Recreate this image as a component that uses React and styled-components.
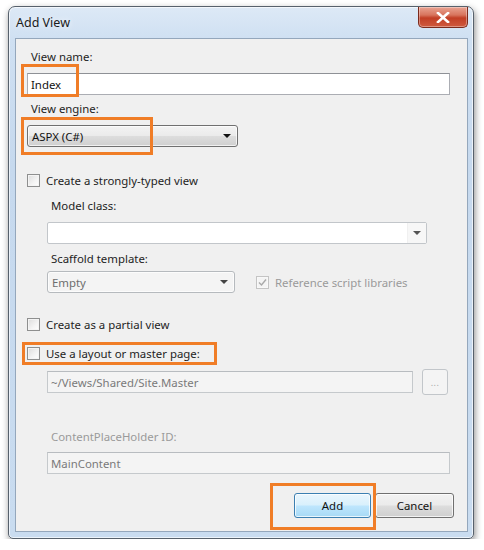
import React from 'react';
import styled, { createGlobalStyle } from 'styled-components';

const GlobalStyle = createGlobalStyle`
  body {
    margin: 0;
    background: #ffffff;
    font-family: "Noto Sans", "Open Sans", sans-serif;
    font-size: 11.4px;
    color: #1e1e1e;
  }
`;

const Page = styled.div`
  padding: 6px 0 0 8px;
`;

const Window = styled.div`
  width: 466px;
  height: 533px;
  box-sizing: border-box;
  display: flex;
  flex-direction: column;
  border: 1px solid #57616c;
  border-radius: 7px 7px 5px 5px;
  background: linear-gradient(180deg, #dde9f6 0%, #cfe0f2 6%, #c6d9ee 30%, #c9dcf0 100%);
  box-shadow: 1px 3px 7px rgba(0, 0, 0, 0.45), inset 0 0 0 1px rgba(255, 255, 255, 0.65);
`;

const TitleBar = styled.div`
  height: 31px;
  flex: none;
  display: flex;
  justify-content: space-between;
  align-items: flex-start;
  padding-left: 7px;
`;

const Title = styled.span`
  margin-top: 7px;
  font-size: 12.5px;
  color: #1b1b1b;
  text-shadow: 0 0 6px rgba(255, 255, 255, 0.9);
`;

const CloseButton = styled.div`
  width: 48px;
  height: 20px;
  margin-right: 5px;
  display: flex;
  align-items: center;
  justify-content: center;
  border: 1px solid #7b2a1c;
  border-top: none;
  border-radius: 0 0 5px 5px;
  background: linear-gradient(180deg, #e9a392 0%, #d8745d 40%, #c23e25 55%, #cf5a3f 100%);
  box-shadow: inset 0 0 0 1px rgba(255, 255, 255, 0.35);
`;

const Body = styled.div`
  position: relative;
  flex: 1;
  margin: 0 5px 6px 6px;
  padding: 10px 17px 0 11px;
  display: flex;
  flex-direction: column;
  background: #f0f0f0;
  border: 1px solid #94a7bc;
`;

const Label = styled.div`
  height: 16px;
  line-height: 16px;
  margin-top: ${({ $top }) => $top || 0}px;
  padding-left: ${({ $indent }) => ($indent || 0) + 4}px;
  color: ${({ $disabled }) => ($disabled ? '#9a9a9a' : '#1e1e1e')};
  white-space: nowrap;
`;

const TextBox = styled.div`
  height: 22px;
  box-sizing: border-box;
  margin-top: ${({ $top }) => $top || 0}px;
  margin-left: ${({ $indent }) => $indent || 0}px;
  width: ${({ $width }) => ($width ? `${$width}px` : 'auto')};
  padding-left: 3px;
  display: flex;
  align-items: center;
  border: 1px solid ${({ $disabled }) => ($disabled ? '#c5c9cc' : '#abadb3')};
  border-top-color: ${({ $disabled }) => ($disabled ? '#b8bcc0' : '#8e9196')};
  background: ${({ $disabled }) => ($disabled ? '#f4f4f4' : '#ffffff')};
  color: ${({ $disabled }) => ($disabled ? '#7a7a7a' : '#111')};
  white-space: nowrap;
`;

const Combo = styled.div`
  height: 22px;
  box-sizing: border-box;
  width: ${({ $width }) => $width}px;
  margin-top: ${({ $top }) => $top || 0}px;
  margin-left: ${({ $indent }) => $indent || 0}px;
  display: flex;
  align-items: center;
  justify-content: space-between;
  padding: 0 6px 0 4px;
  border: 1px solid ${({ $disabled }) => ($disabled ? '#b6babe' : '#707070')};
  border-radius: 3px;
  background: ${({ $disabled }) =>
    $disabled
      ? '#f4f4f4'
      : 'linear-gradient(180deg, #f3f3f3 0%, #ebebeb 48%, #dddddd 52%, #cfcfcf 100%)'};
  box-shadow: inset 0 0 0 1px rgba(255, 255, 255, 0.7);
  color: ${({ $disabled }) => ($disabled ? '#6e6e6e' : '#111')};
  flex: none;
`;

const EditCombo = styled.div`
  height: 22px;
  width: ${({ $width }) => $width}px;
  box-sizing: border-box;
  margin-top: ${({ $top }) => $top || 0}px;
  margin-left: ${({ $indent }) => $indent || 0}px;
  display: flex;
  border: 1px solid #c2c6ca;
  border-radius: 2px;
  background: #ffffff;
`;

const EditField = styled.div`
  flex: 1;
`;

const EditArrow = styled.div`
  width: 18px;
  display: flex;
  align-items: center;
  justify-content: center;
  background: #f7f7f7;
  border-left: 1px solid #f0f0f0;
`;

const Arrow = styled.span`
  width: 0;
  height: 0;
  border-left: 4px solid transparent;
  border-right: 4px solid transparent;
  border-top: 4px solid ${({ $color }) => $color || '#111'};
`;

const CheckRow = styled.div`
  display: flex;
  align-items: center;
  height: 16px;
  margin-top: ${({ $top }) => $top || 0}px;
  gap: 6px;
  color: ${({ $disabled }) => ($disabled ? '#9a9a9a' : '#1e1e1e')};
  white-space: nowrap;
`;

const Box = styled.span`
  width: 13px;
  height: 13px;
  box-sizing: border-box;
  flex: none;
  display: flex;
  align-items: center;
  justify-content: center;
  border: 1px solid ${({ $disabled }) => ($disabled ? '#c4c4c4' : '#8e8f8f')};
  background: ${({ $disabled }) =>
    $disabled ? '#f4f4f4' : 'linear-gradient(135deg, #dcdcdc 0%, #f4f4f4 60%, #ffffff 100%)'};
  box-shadow: inset 0 0 0 1px ${({ $disabled }) => ($disabled ? '#f8f8f8' : '#f4f4f4')};
`;

const Row = styled.div`
  display: flex;
  align-items: center;
  gap: ${({ $gap }) => $gap || 0}px;
  margin-top: ${({ $top }) => $top || 0}px;
  margin-left: ${({ $indent }) => $indent || 0}px;
  margin-right: ${({ $right }) => $right || 0}px;
  justify-content: ${({ $end }) => ($end ? 'flex-end' : 'flex-start')};
`;

const SmallButton = styled.div`
  width: 26px;
  height: 26px;
  box-sizing: border-box;
  flex: none;
  display: flex;
  align-items: center;
  justify-content: center;
  border: 1px solid #c2c6ca;
  border-radius: 3px;
  background: #f4f4f4;
  color: #a8a8a8;
  font-size: 9px;
  letter-spacing: 0.5px;
`;

const Button = styled.div`
  width: ${({ $width }) => $width}px;
  height: 25px;
  box-sizing: border-box;
  display: flex;
  align-items: center;
  justify-content: center;
  border: 1px solid ${({ $primary }) => ($primary ? '#3c7fb1' : '#707070')};
  border-radius: 3px;
  background: ${({ $primary }) =>
    $primary
      ? 'linear-gradient(180deg, #eaf6fd 0%, #d9f0fc 48%, #bee6fd 52%, #a7d9f5 100%)'
      : 'linear-gradient(180deg, #f2f2f2 0%, #ebebeb 48%, #dddddd 52%, #cfcfcf 100%)'};
  box-shadow: inset 0 0 0 1px rgba(255, 255, 255, 0.75);
  color: #111;
`;

// orange call-out frames drawn over the form
const Highlight = styled.div`
  position: absolute;
  left: ${({ $x }) => $x}px;
  top: ${({ $y }) => $y}px;
  width: ${({ $w }) => $w}px;
  height: ${({ $h }) => $h}px;
  box-sizing: border-box;
  border: 3px solid #f07d27;
  pointer-events: none;
`;

const CloseGlyph = () => (
  <svg width="14" height="11" viewBox="0 0 14 11">
    <path
      d="M2 1 L12 10 M12 1 L2 10"
      stroke="#ffffff"
      strokeWidth="2.6"
      strokeLinecap="square"
      fill="none"
    />
  </svg>
);

const Tick = () => (
  <svg width="9" height="9" viewBox="0 0 9 9">
    <path d="M1 4.5 L3.5 7 L8 1.5" stroke="#a9a9a9" strokeWidth="1.4" fill="none" />
  </svg>
);

export default function App() {
  return (
    <>
      <GlobalStyle />
      <Page>
        <Window>
          <TitleBar>
            <Title>Add View</Title>
            <CloseButton>
              <CloseGlyph />
            </CloseButton>
          </TitleBar>
          <Body>
            <Label>View name:</Label>
            <TextBox $top={8}>Index</TextBox>

            <Label $top={6}>View engine:</Label>
            <Combo $top={8} $width={211}>
              <span>ASPX (C#)</span>
              <Arrow />
            </Combo>

            <CheckRow $top={25}>
              <Box />
              Create a strongly-typed view
            </CheckRow>

            <Label $top={10} $indent={20}>Model class:</Label>
            <EditCombo $top={8} $indent={20} $width={380}>
              <EditField />
              <EditArrow>
                <Arrow $color="#555" />
              </EditArrow>
            </EditCombo>

            <Label $top={7} $indent={20}>Scaffold template:</Label>
            <Row $top={4} $indent={20} $gap={21}>
              <Combo $disabled $width={188}>
                <span>Empty</span>
                <Arrow $color="#444" />
              </Combo>
              <CheckRow $disabled>
                <Box $disabled>
                  <Tick />
                </Box>
                Reference script libraries
              </CheckRow>
            </Row>

            <CheckRow $top={23}>
              <Box />
              Create as a partial view
            </CheckRow>
            <CheckRow $top={13}>
              <Box />
              Use a layout or master page:
            </CheckRow>

            <Row $top={8} $indent={20} $gap={9}>
              <TextBox $disabled $width={366}>~/Views/Shared/Site.Master</TextBox>
              <SmallButton>...</SmallButton>
            </Row>

            <Label $top={34} $indent={20} $disabled>ContentPlaceHolder ID:</Label>
            <TextBox $top={7} $indent={20} $disabled>MainContent</TextBox>

            <Row $top={19} $end $gap={4} $right={-4}>
              <Button $primary $width={77}>Add</Button>
              <Button $width={79}>Cancel</Button>
            </Row>

            <Highlight $x={5} $y={25} $w={58} $h={33} />
            <Highlight $x={5} $y={78} $w={132} $h={38} />
            <Highlight $x={6} $y={303} $w={195} $h={23} />
            <Highlight $x={254} $y={444} $w={106} $h={47} />
          </Body>
        </Window>
      </Page>
    </>
  );
}
